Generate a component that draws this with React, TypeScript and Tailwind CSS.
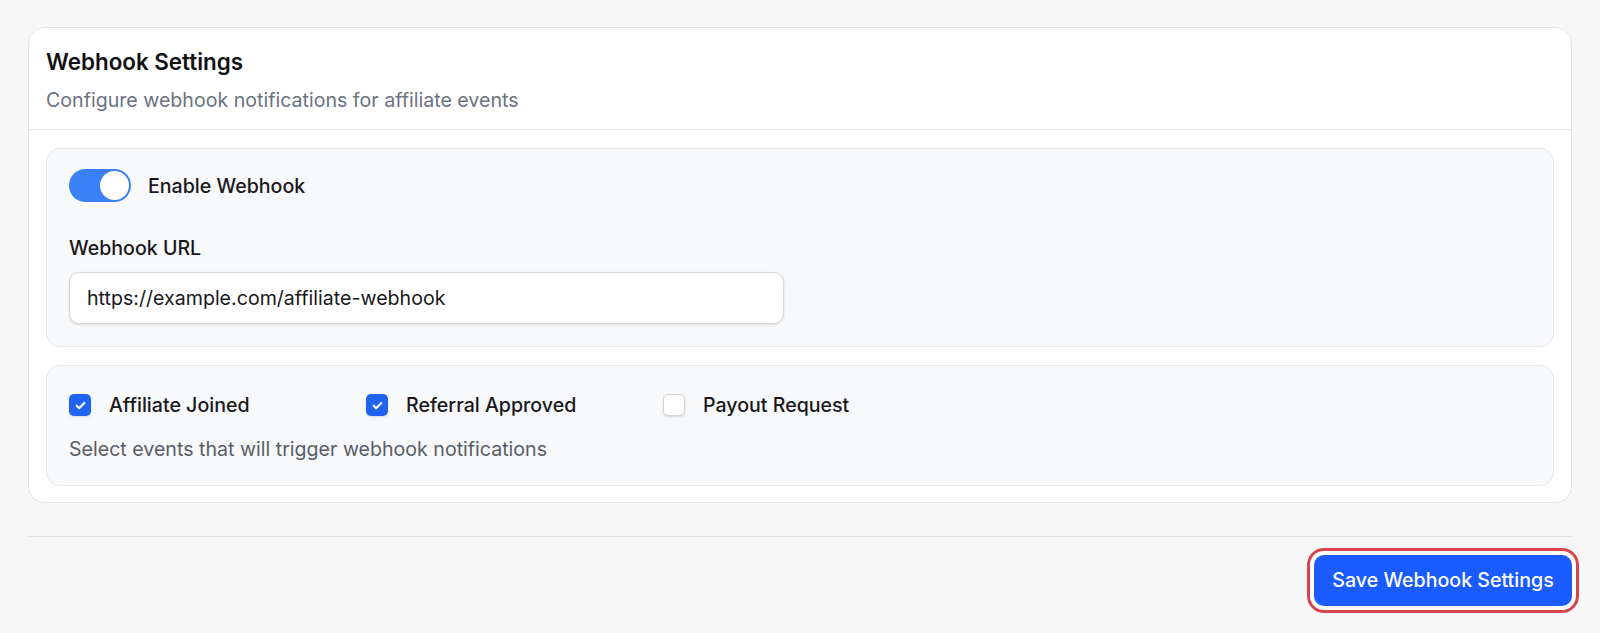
import { useState } from 'react';

const events = [
  { id: 'joined', label: 'Affiliate Joined', checked: true },
  { id: 'approved', label: 'Referral Approved', checked: true },
  { id: 'payout', label: 'Payout Request', checked: false },
];

const Checkbox = ({ checked, label }: { checked: boolean; label: string }) => (
  <label className="flex w-[297px] items-center gap-[18px]">
    {checked ? (
      <span className="flex h-[22px] w-[22px] items-center justify-center rounded-[5px] bg-[#1f63f0] shadow-sm">
        <svg width="13" height="13" viewBox="0 0 24 24" fill="none" stroke="white" strokeWidth="4" strokeLinecap="round" strokeLinejoin="round">
          <path d="M5 12.5l4.5 4.5L19 7.5" />
        </svg>
      </span>
    ) : (
      <span className="h-[22px] w-[22px] rounded-[5px] border border-[#d4d4d8] bg-white shadow-sm" />
    )}
    <span className="text-[19.6px] font-medium leading-[28px] text-[#18181b]">{label}</span>
  </label>
);

export default function App() {
  const [enabled] = useState(true);

  return (
    <div className="min-h-screen bg-[#f7f7f8] px-[28px] pt-[27px] font-['Inter',sans-serif]">
      <div className="rounded-[16px] border border-[#e4e4e7] bg-white">
        {/* Header */}
        <div className="border-b border-[#e7e7ea] px-[17px] pb-[15px] pt-[19px]">
          <h2 className="text-[22.4px] font-semibold leading-[30px] text-[#111113]">Webhook Settings</h2>
          <p className="mt-[9px] text-[19.6px] leading-[28px] text-[#6b7280]">
            Configure webhook notifications for affiliate events
          </p>
        </div>

        <div className="flex flex-col gap-[18px] px-[17px] pb-[16px] pt-[18px]">
          {/* Toggle + URL */}
          <div className="rounded-[14px] border border-[#e6e7ea] bg-[#f8f9fb] px-[22px] pb-[22px] pt-[20px]">
            <div className="flex h-[33px] items-center gap-[17px]">
              <span className={`flex h-[33px] w-[62px] items-center rounded-full p-[2px] ${enabled ? 'justify-end bg-[#3a80f6]' : 'justify-start bg-gray-300'}`}>
                <span className="h-[29px] w-[29px] rounded-full bg-white" />
              </span>
              <span className="text-[19.6px] font-medium leading-[28px] text-[#18181b]">Enable Webhook</span>
            </div>
            <div className="mt-[32px] text-[19.6px] font-medium leading-[28px] text-[#18181b]">Webhook URL</div>
            <input
              readOnly
              value="https://example.com/affiliate-webhook"
              className="mt-[10px] h-[52px] w-[715px] rounded-[10px] border border-[#d6d6da] bg-white px-[17px] text-[19.6px] text-[#18181b] shadow-sm outline-none"
            />
          </div>

          {/* Events */}
          <div className="rounded-[14px] border border-[#e6e7ea] bg-[#f8f9fb] px-[22px] pb-[22px] pt-[25px]">
            <div className="flex items-center">
              {events.map((e) => (
                <Checkbox key={e.id} checked={e.checked} label={e.label} />
              ))}
            </div>
            <p className="mt-[16px] text-[19.6px] leading-[28px] text-[#585d66]">
              Select events that will trigger webhook notifications
            </p>
          </div>
        </div>
      </div>

      {/* Footer */}
      <div className="mt-[33px] flex justify-end border-t border-[#e3e3e6] pt-[18px]">
        <button className="h-[51px] w-[258px] rounded-[10px] bg-[#1a5cff] text-[19.6px] font-medium text-white ring-3 ring-[#d9434a] ring-offset-4 ring-offset-white">
          Save Webhook Settings
        </button>
      </div>
    </div>
  );
}
